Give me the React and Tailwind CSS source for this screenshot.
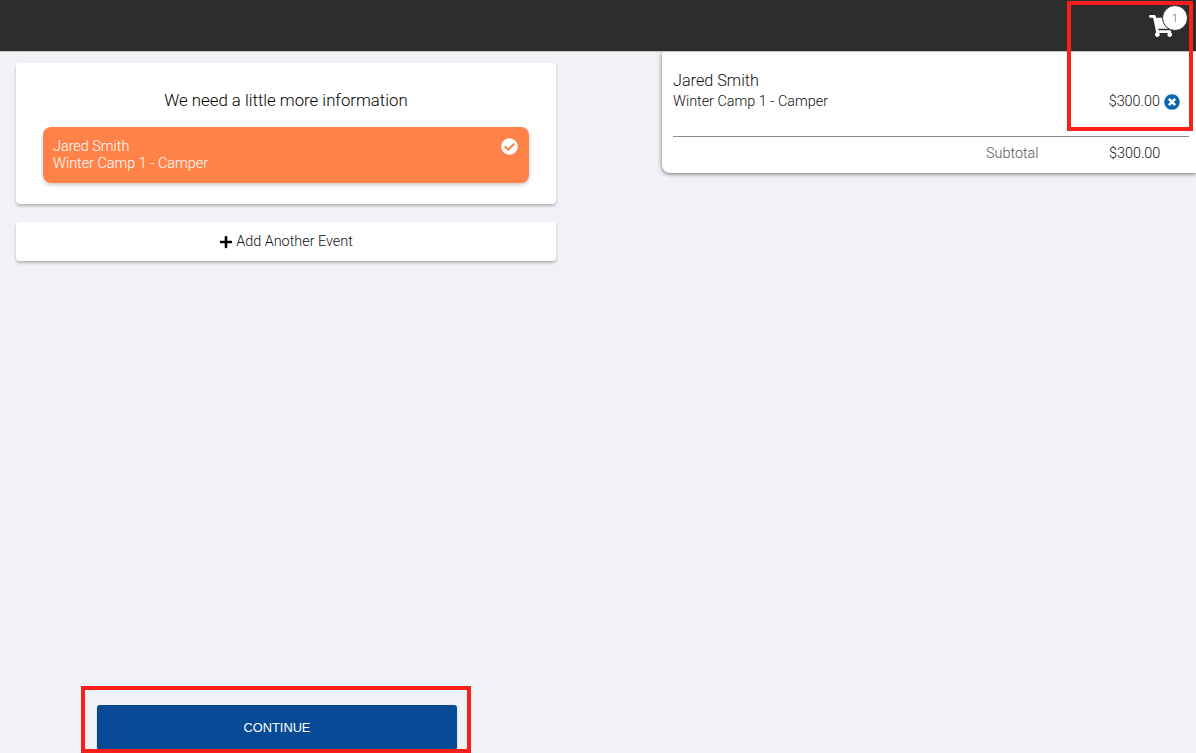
import { FaShoppingCart, FaCheckCircle, FaTimesCircle, FaPlus } from 'react-icons/fa'

export default function App() {
  return (
    <div className="relative h-[753px] overflow-hidden flex flex-col bg-[#f0f2f6] font-['Roboto',sans-serif] font-light text-[#111]">
      <header className="h-[52px] shrink-0 bg-[#2d2d2d] border-b border-[#c4c4c4] relative">
        <FaShoppingCart className="absolute left-[1149px] top-[15px] text-white w-[25px] h-[22px]" />
        <div className="absolute left-[1162px] top-[5px] w-[26px] h-[26px] rounded-full bg-white border border-[#333] flex items-center justify-center text-[10px] text-[#555]">1</div>
      </header>

      <div className="flex-1 flex justify-between items-start">
        <div className="ml-4 w-[540px] pt-[11px] flex flex-col h-full">
          <section className="h-[141px] bg-white rounded shadow-[0_2px_3px_rgba(0,0,0,0.25)] px-[27px] pt-[27px]">
            <h1 className="text-center text-[16.8px] leading-5 font-light text-black">We need a little more information</h1>
            <div className="mt-[17px] h-14 bg-[#ff8349] rounded-lg shadow-[0_2px_4px_rgba(0,0,0,0.2)] pl-[10px] pr-[11px] pt-[11px] flex justify-between items-start text-white text-[14.4px] leading-[17px]">
              <div>
                <div>Jared Smith</div>
                <div>Winter Camp 1 - Camper</div>
              </div>
              <FaCheckCircle className="w-[17px] h-[17px]" />
            </div>
          </section>

          <button className="mt-[18px] h-[39px] bg-white rounded shadow-[0_2px_3px_rgba(0,0,0,0.25)] flex items-center justify-center gap-[3px] text-[14.4px] text-[#111]">
            <FaPlus className="w-[14px] h-[14px] text-black" />
            <span className="font-light">Add Another Event</span>
          </button>

          <div className="mt-auto mb-[3px] px-[81px]">
            <button className="w-[360px] h-[45px] bg-[#074a96] rounded-[3px] text-white text-[12.8px] font-['Liberation_Sans',sans-serif] shadow-[0_1px_2px_rgba(0,0,0,0.2)]">CONTINUE</button>
          </div>
        </div>

        <aside className="-mt-px w-[534px] h-[122px] bg-white rounded-bl-lg rounded-tl-sm shadow-[0_1px_4px_rgba(0,0,0,0.55)] pl-[11px] pr-[7px] pt-5">
          <div className="text-[16.2px] leading-[19px]">Jared Smith</div>
          <div className="mt-px flex justify-between items-center text-[14.4px] leading-[21px] pr-[9px]">
            <span>Winter Camp 1 - Camper</span>
            <span className="flex items-center gap-1">
              $300.00
              <FaTimesCircle className="w-4 h-4 text-[#0b68b0]" />
            </span>
          </div>
          <div className="mt-6 border-t border-[#8a8a8a] flex pt-2 text-[14.4px] leading-[18px]">
            <span className="ml-[313px] w-[123px] text-[#555]">Subtotal</span>
            <span>$300.00</span>
          </div>
        </aside>
      </div>

      <div className="absolute left-[1067px] top-[1px] w-[126px] h-[130px] border-4 border-[#fb1f1b]" />
      <div className="absolute left-[81px] top-[686px] w-[390px] h-[67px] border-4 border-[#fb1f1b]" />
    </div>
  )
}
